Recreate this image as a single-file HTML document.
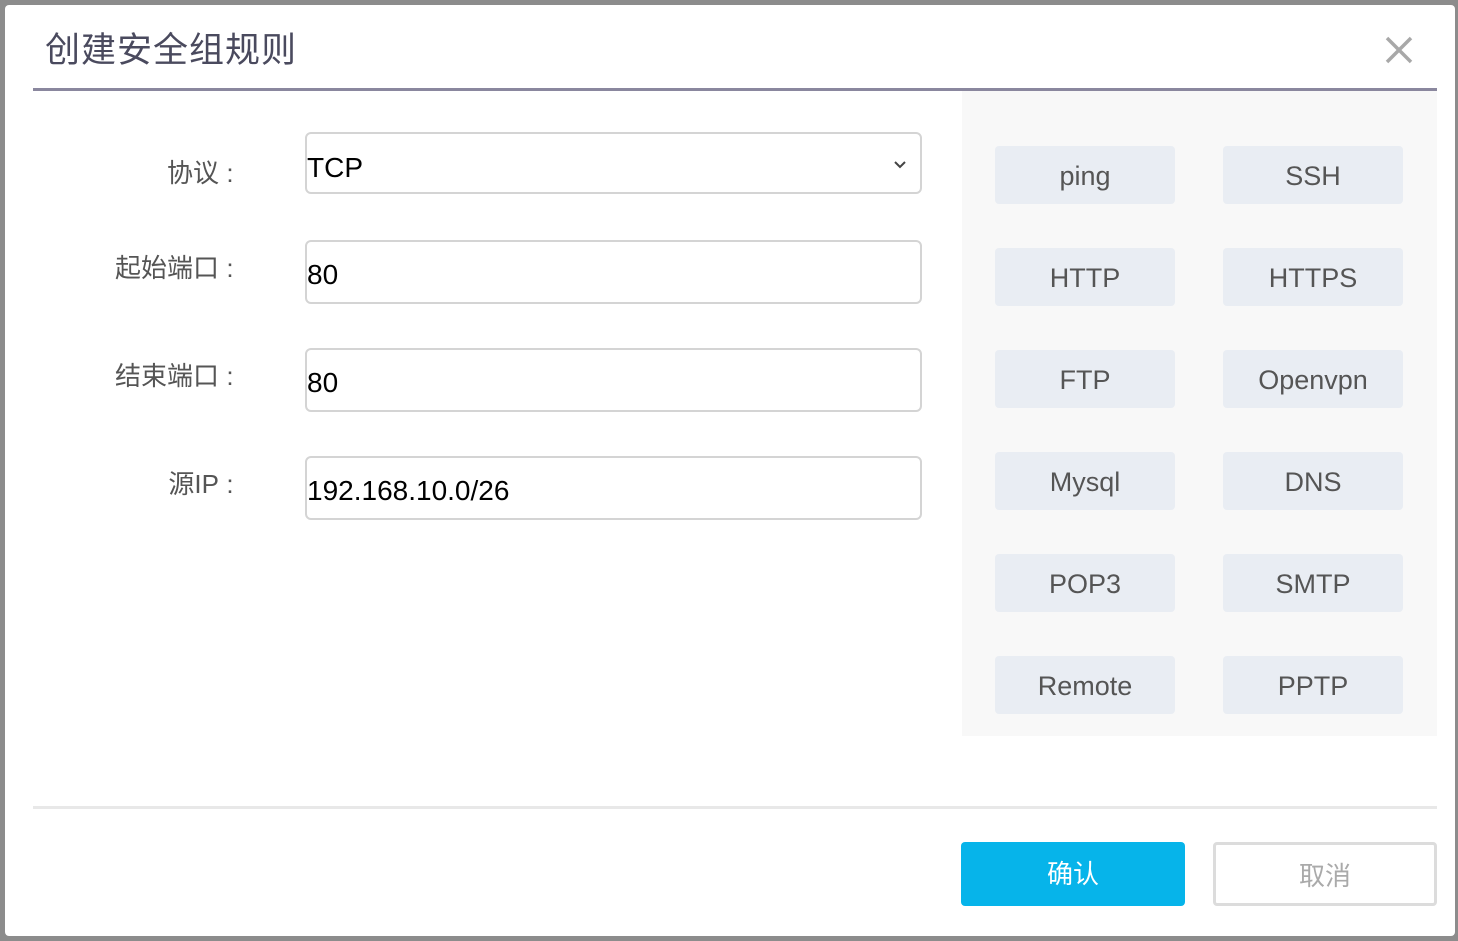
<!DOCTYPE html>
<html><head><meta charset="utf-8"><style>
body{margin:0;width:1458px;height:941px;background:#8c8c8c;position:relative;overflow:hidden;font-family:"Liberation Sans","Noto Sans CJK SC",sans-serif}
.dlg{position:absolute;left:5px;top:5px;width:1450px;height:931px;background:#fff;border-radius:4px}
.a{position:absolute}
.title{left:40px;top:24px;font-size:35px;letter-spacing:1px;color:#4a4a5e;line-height:44px}
.hl{left:28px;top:83px;width:1404px;height:3px;background:#8a879e}
.lbl{width:236px;left:0;text-align:right;font-size:26px;color:#555;line-height:34px}
.lbl i{font-style:normal;display:inline-block;width:22px;text-align:center}
.inp{left:300px;width:613px;height:60px;border:2px solid #d4d4d4;border-radius:6px;font-size:28px;color:#000;line-height:60px;padding-left:0;box-sizing:content-box}
.panel{left:957px;top:86px;width:475px;height:645px;background:#f8f8f8}
.b{width:180px;height:58px;background:#e9edf3;border-radius:4px;text-align:center;line-height:60px;font-size:27px;color:#555}
.fl{left:28px;top:801px;width:1404px;height:3px;background:#e8e8e8}
</style></head><body>
<div class="dlg">
<div class="a title">创建安全组规则</div>
<svg class="a" style="left:1380px;top:31px" width="28" height="28" viewBox="0 0 28 28"><path d="M2 2L26 26M26 2L2 26" stroke="#a8a8a8" stroke-width="3.5"/></svg>
<div class="a hl"></div>
<div class="a lbl" style="top:151px">协议<i>:</i></div>
<div class="a lbl" style="top:246px">起始端口<i>:</i></div>
<div class="a lbl" style="top:354px">结束端口<i>:</i></div>
<div class="a lbl" style="top:462px">源IP<i>:</i></div>
<div class="a inp" style="top:127px;line-height:68px;height:58px">TCP<svg class="a" style="left:586px;top:26px" width="14" height="10" viewBox="0 0 14 10"><path d="M2 2L7 7L12 2" stroke="#444" stroke-width="2" fill="none"/></svg></div>
<div class="a inp" style="top:235px;line-height:66px">80</div>
<div class="a inp" style="top:343px;line-height:66px">80</div>
<div class="a inp" style="top:451px;line-height:66px">192.168.10.0/26</div>
<div class="a panel"></div>
<div class="a b" style="left:990px;top:141px">ping</div><div class="a b" style="left:1218px;top:141px">SSH</div>
<div class="a b" style="left:990px;top:243px">HTTP</div><div class="a b" style="left:1218px;top:243px">HTTPS</div>
<div class="a b" style="left:990px;top:345px">FTP</div><div class="a b" style="left:1218px;top:345px">Openvpn</div>
<div class="a b" style="left:990px;top:447px">Mysql</div><div class="a b" style="left:1218px;top:447px">DNS</div>
<div class="a b" style="left:990px;top:549px">POP3</div><div class="a b" style="left:1218px;top:549px">SMTP</div>
<div class="a b" style="left:990px;top:651px">Remote</div><div class="a b" style="left:1218px;top:651px">PPTP</div>
<div class="a fl"></div>
<div class="a" style="left:956px;top:837px;width:224px;height:64px;background:#06b4ea;border-radius:4px;color:#fff;font-size:26px;text-align:center;line-height:64px">确认</div>
<div class="a" style="left:1208px;top:837px;width:218px;height:58px;border:3px solid #dcdcdc;border-radius:4px;color:#aaa;font-size:26px;text-align:center;line-height:62px">取消</div>
</div>
</body></html>
